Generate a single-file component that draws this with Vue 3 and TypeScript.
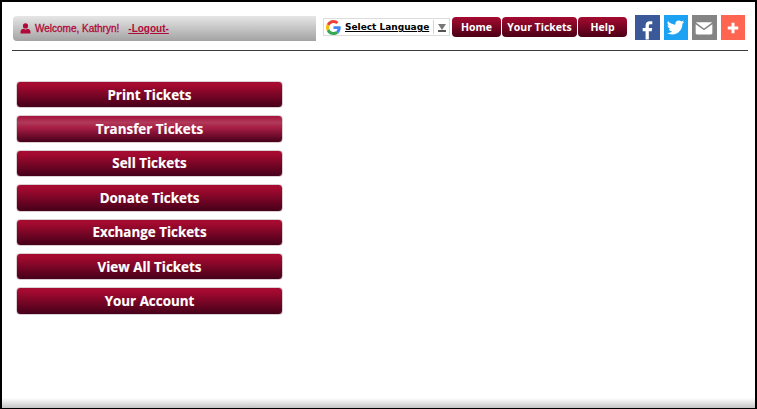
<script setup lang="ts">
const menuItems = [
  { label: 'Print Tickets', active: false },
  { label: 'Transfer Tickets', active: true },
  { label: 'Sell Tickets', active: false },
  { label: 'Donate Tickets', active: false },
  { label: 'Exchange Tickets', active: false },
  { label: 'View All Tickets', active: false },
  { label: 'Your Account', active: false },
]

const navItems = [
  { label: 'Home', width: 49 },
  { label: 'Your Tickets', width: 75 },
  { label: 'Help', width: 49 },
]
</script>

<template>
  <div class="frame">
    <header class="topbar">
      <div class="welcome">
        <svg class="user-icon" viewBox="0 0 12 12" width="11" height="11" aria-hidden="true">
          <circle cx="6" cy="3.2" r="2.8" fill="currentColor" />
          <path d="M0.6 11.5V9.4C0.6 7.6 2.4 6.6 4 6.4L6 7.4L8 6.4C9.6 6.6 11.4 7.6 11.4 9.4V11.5Z" fill="currentColor" />
        </svg>
        <span class="welcome-text">Welcome, Kathryn!</span>
        <a class="logout" href="#">-Logout-</a>
      </div>

      <div class="translate">
        <svg class="google" viewBox="0 0 48 48" width="15" height="15" aria-hidden="true">
          <path fill="#EA4335" d="M24 9.5c3.5 0 6.7 1.2 9.2 3.6l6.9-6.9C35.9 2.4 30.5 0 24 0 14.6 0 6.5 5.4 2.6 13.2l8 6.2C12.5 13.7 17.8 9.5 24 9.5z" />
          <path fill="#4285F4" d="M47 24.5c0-1.6-.1-3.1-.4-4.5H24v9h12.9c-.6 3-2.2 5.5-4.8 7.2l7.7 6C44.4 37.9 47 31.8 47 24.5z" />
          <path fill="#FBBC05" d="M10.5 28.6c-.5-1.4-.8-3-.8-4.6s.3-3.2.8-4.6l-8-6.2C.9 16.5 0 20.1 0 24s.9 7.5 2.6 10.8l7.9-6.2z" />
          <path fill="#34A853" d="M24 48c6.5 0 11.9-2.1 15.9-5.8l-7.7-6c-2.1 1.4-4.9 2.3-8.2 2.3-6.2 0-11.5-4.2-13.4-9.9l-8 6.2C6.5 42.6 14.6 48 24 48z" />
        </svg>
        <a class="language" href="#">Select Language</a>
        <span class="divider"></span>
        <span class="caret"></span>
      </div>

      <nav class="nav">
        <a v-for="item in navItems" :key="item.label" class="nav-btn" :style="{ width: item.width + 'px' }" href="#">{{ item.label }}</a>
      </nav>

      <div class="social">
        <span class="share fb">
          <svg class="fb-glyph" viewBox="0 2 24 20" width="23" height="20" aria-hidden="true">
            <path fill="#fff" d="M13.4 22v-8.6h3l.5-3.5h-3.5V7.8c0-1 .3-1.7 1.7-1.7H17V3c-.4-.1-1.4-.2-2.6-.2-2.6 0-4.4 1.6-4.4 4.5v2.6H7v3.5h3V22z" />
          </svg>
        </span>
        <span class="share tw">
          <svg viewBox="0 0 24 24" width="19" height="19" aria-hidden="true">
            <path fill="#fff" d="M23 5.1c-.8.4-1.7.6-2.6.7.9-.6 1.6-1.4 2-2.5-.9.5-1.8.9-2.9 1.1C18.7 3.5 17.5 3 16.2 3c-2.5 0-4.5 2-4.5 4.5 0 .4 0 .7.1 1C8 8.3 4.7 6.5 2.5 3.8c-.4.7-.6 1.5-.6 2.3 0 1.6.8 2.9 2 3.7-.7 0-1.4-.2-2-.6v.1c0 2.2 1.6 4 3.6 4.4-.4.1-.8.2-1.2.2-.3 0-.6 0-.8-.1.6 1.8 2.2 3.1 4.2 3.1-1.5 1.2-3.5 1.9-5.6 1.9-.4 0-.7 0-1.1-.1C3 20 5.4 20.7 7.9 20.7c8.3 0 12.8-6.9 12.8-12.8v-.6c.9-.6 1.7-1.4 2.3-2.2z" />
          </svg>
        </span>
        <span class="share mail">
          <svg viewBox="0 0 24 24" width="20" height="20" aria-hidden="true">
            <path fill="#fff" d="M3.5 5h17c.5 0 .9.2 1.1.5L12 12.5 2.4 5.5c.2-.3.6-.5 1.1-.5z" />
            <path fill="#fff" d="M2 7.5v10.800c0 .8.7 1.400 1.500 1.400h17c.8 0 1.500-.6 1.500-1.400V7.500l-10 7.200z" />
          </svg>
        </span>
        <span class="share add">
          <svg viewBox="0 0 24 24" width="18" height="18" aria-hidden="true">
            <path fill="#fff" d="M10 5h4v5h5v4h-5v5h-4v-5H5v-4h5z" />
          </svg>
        </span>
      </div>
    </header>

    <main class="menu">
      <a v-for="item in menuItems" :key="item.label" class="menu-btn" :class="{ 'is-active': item.active }" href="#">{{ item.label }}</a>
    </main>

    <div class="bottom-fade"></div>
  </div>
</template>

<style scoped>
.frame {
  position: relative;
  box-sizing: border-box;
  width: 757px;
  height: 409px;
  padding: 0 7px 0 10px;
  background: #fff;
  border: solid #000;
  border-width: 2px 2px 1px 2px;
  overflow: hidden;
  font-family: "Liberation Sans", Arial, sans-serif;
}

.topbar {
  display: flex;
  align-items: flex-start;
  box-sizing: border-box;
  height: 49px;
  padding: 14px 0 0 1px;
  border-bottom: 1px solid #3c3c3c;
}

.welcome {
  display: flex;
  flex: none;
  align-items: center;
  box-sizing: border-box;
  width: 303px;
  height: 25px;
  padding-left: 7px;
  border-radius: 4px 0 0 4px;
  background: linear-gradient(#e6e6e6, #a3a3a3);
  color: #b0093a;
  font-size: 10px;
  font-weight: 400;
  -webkit-text-stroke: 0.3px #b0093a;
}

.user-icon {
  flex: none;
  margin-right: 4px;
}

.welcome-text {
  margin-right: 9px;
}

.logout {
  color: #b0093a;
  font-weight: 700;
  -webkit-text-stroke: 0;
}

.translate {
  display: flex;
  flex: none;
  align-items: center;
  box-sizing: border-box;
  width: 127px;
  height: 18px;
  margin: 2px 0 0 7px;
  padding-left: 2px;
  border: 1px solid #dcdcdc;
  background: #fff;
}

.google {
  flex: none;
  margin-right: 4px;
}

.language {
  color: #000;
  font-family: "DejaVu Sans", sans-serif;
  font-size: 9px;
  font-weight: 700;
  white-space: nowrap;
}

.divider {
  flex: none;
  width: 1px;
  height: 14px;
  margin-left: 4px;
  background: #d5d5d5;
}

.caret {
  flex: none;
  width: 0;
  height: 0;
  margin-left: 4px;
  border-style: solid;
  border-width: 6px 4px 0;
  border-color: #777 transparent transparent;
  box-shadow: 0 2px 0 #555;
}

.nav {
  display: flex;
  flex: none;
  gap: 1px;
  margin: 1px 0 0 2px;
}

.nav-btn {
  display: flex;
  align-items: center;
  justify-content: center;
  box-sizing: border-box;
  height: 20px;
  border-radius: 4px;
  background: linear-gradient(#a50a30, #4a0016);
  color: #fff;
  font-family: "Open Sans", sans-serif;
  font-size: 10.5px;
  font-weight: 700;
  text-decoration: none;
  white-space: nowrap;
}

.social {
  display: flex;
  flex: none;
  gap: 4px;
  margin: -1px 0 0 8px;
}

.share {
  display: flex;
  align-items: center;
  justify-content: center;
  width: 24.5px;
  height: 25px;
}

.fb {
  background: #3b5998;
}

.fb-glyph {
  align-self: flex-end;
}

.tw {
  background: #1da1f2;
}

.mail {
  background: #848484;
}

.add {
  background: #ff6550;
}

.menu {
  display: flex;
  flex-direction: column;
  gap: 7px;
  width: 267px;
  margin: 30px 0 0 4px;
}

.menu-btn {
  display: flex;
  align-items: center;
  justify-content: center;
  box-sizing: border-box;
  height: 27.4px;
  border: 1px solid #dccfd3;
  border-radius: 4px;
  background: linear-gradient(#a50a30, #a50a30 12%, #45001a);
  color: #fff;
  font-family: "Open Sans", sans-serif;
  font-size: 13.4px;
  font-weight: 700;
  -webkit-text-stroke: 0.15px #fff;
  text-decoration: none;
}

.menu-btn.is-active {
  background: linear-gradient(#a5123c 0, #b03a5a 25%, #a81d45 45%, #45001a);
}

.bottom-fade {
  position: absolute;
  left: 0;
  right: 0;
  bottom: 0;
  height: 10px;
  background: linear-gradient(rgba(200, 200, 200, 0), #c4c4c4);
}
</style>
